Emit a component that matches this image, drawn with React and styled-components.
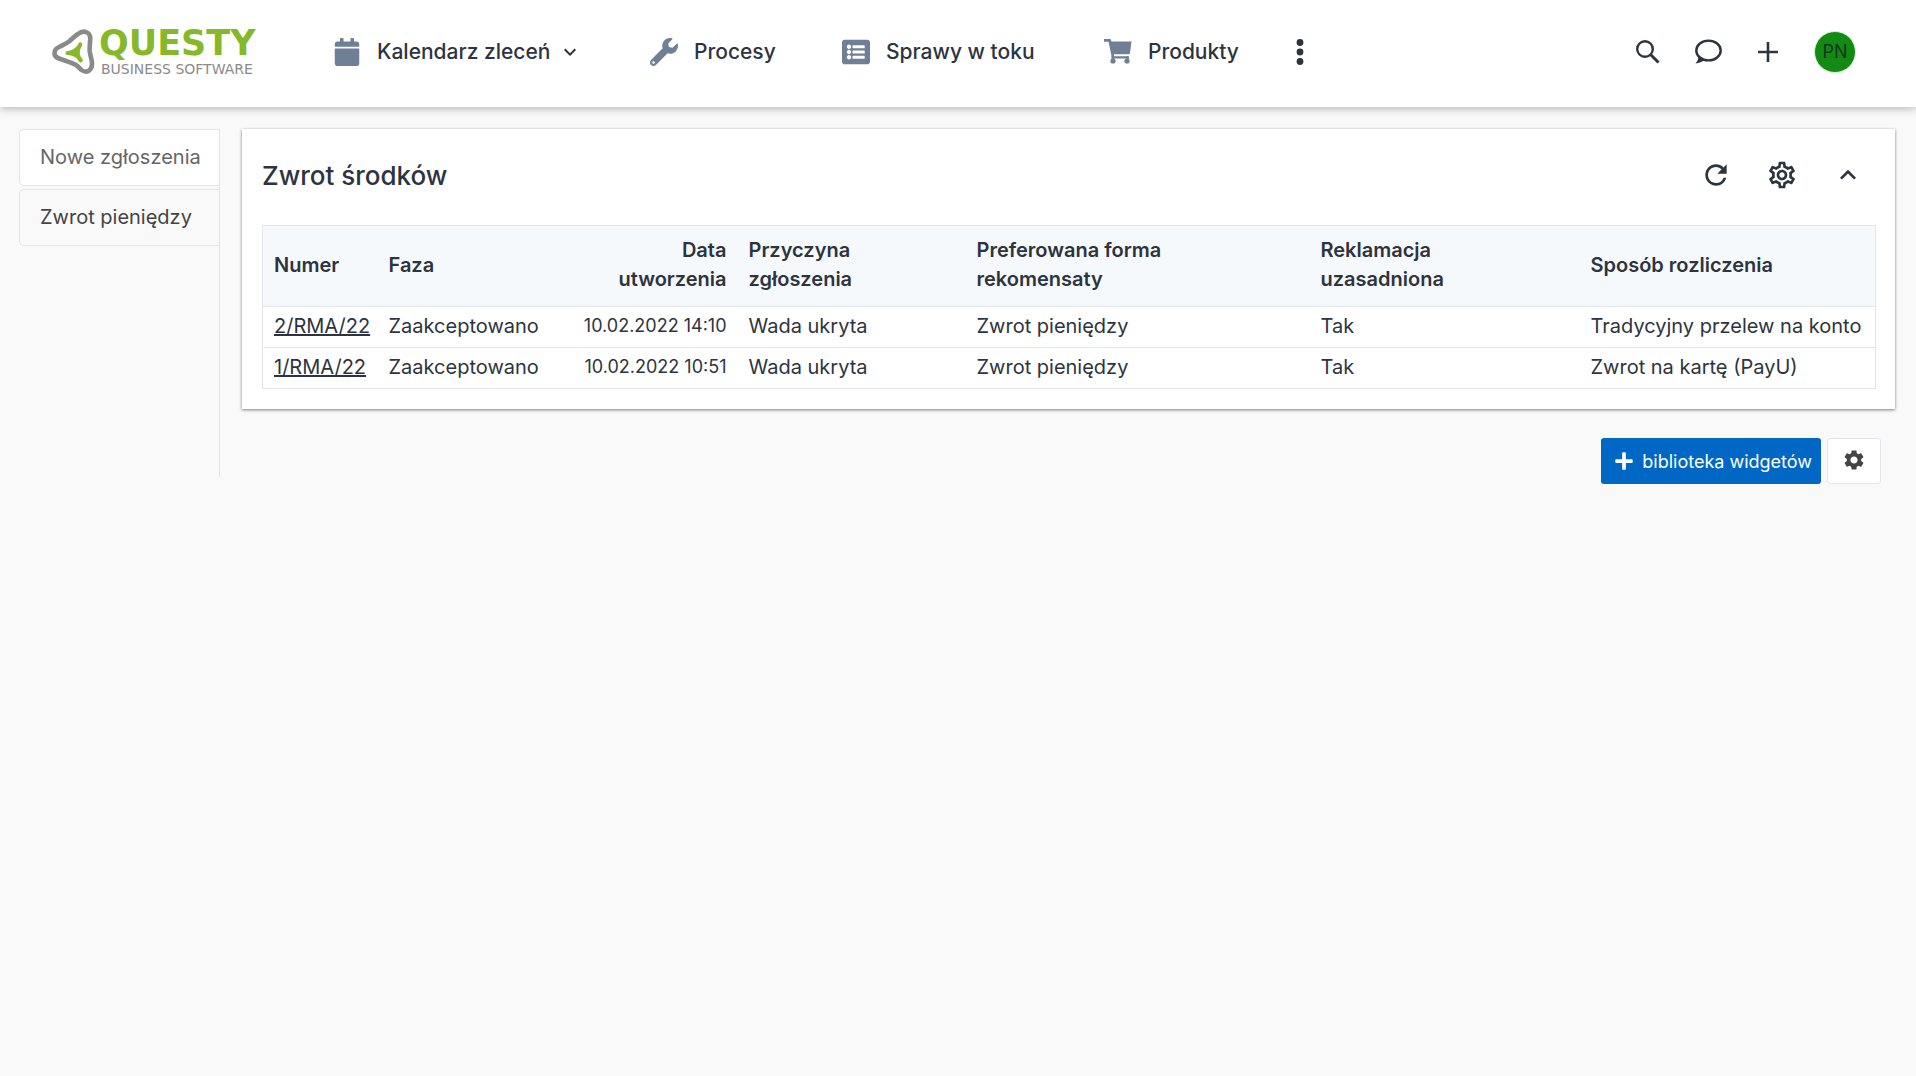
import React from 'react';
import styled, { createGlobalStyle } from 'styled-components';
import { FaCalendar, FaWrench, FaListAlt, FaPlus } from 'react-icons/fa';
import { MdRefresh, MdOutlineSettings, MdSettings, MdKeyboardArrowUp, MdKeyboardArrowDown } from 'react-icons/md';

const ink = '#2d3440';
const line = '#e2e6ea';

const GlobalStyle = createGlobalStyle`
  * { box-sizing: border-box; }
  body {
    margin: 0;
    background: #f9f9f9;
    color: ${ink};
    font-family: Inter, 'Noto Sans', sans-serif;
    font-size: 20px;
  }
  button, a { font: inherit; color: inherit; }
  svg { display: block; flex: none; }
`;

const Header = styled.header`
  display: flex;
  align-items: center;
  height: 107px;
  padding: 0 60px 4px 52px;
  background: #fff;
  box-shadow: 0 2px 8px rgba(0, 0, 0, 0.26);
`;

const Brand = styled.a`
  display: flex;
  align-items: center;
  gap: 4px;
  width: 281px;
  text-decoration: none;
`;

const BrandText = styled.span`
  display: flex;
  flex-direction: column;
  gap: 2px;
  font-family: 'DejaVu Sans', sans-serif;
`;

const BrandName = styled.span`
  color: #86b929;
  font-size: 35px;
  font-weight: 700;
  line-height: 32px;
`;

const BrandLine = styled.span`
  color: #8a8a8a;
  font-size: 14px;
  line-height: 16px;
  padding-left: 2px;
  white-space: nowrap;
`;

const Nav = styled.nav`
  display: flex;
  align-items: center;
  flex: 1;
`;

const NavLink = styled.a`
  display: flex;
  align-items: center;
  gap: 16px;
  width: ${(p) => p.$width}px;
  font-size: 21px;
  font-weight: 500;
  text-decoration: none;
  white-space: nowrap;

  > svg:first-child { color: #6f7f96; }
`;

const NavLabel = styled.span`
  display: flex;
  align-items: center;
  gap: 8px;
`;

const IconButton = styled.button`
  display: flex;
  align-items: center;
  justify-content: center;
  width: 40px;
  height: 40px;
  padding: 0;
  border: 0;
  background: none;
  cursor: pointer;
`;

const Tools = styled.div`
  display: flex;
  align-items: center;
  gap: 20px;
`;

const Avatar = styled.button`
  width: 42px;
  height: 42px;
  margin-left: 6px;
  padding: 0;
  border: 1px solid #d3f3d3;
  border-radius: 50%;
  background: #128a14;
  && { color: #17361f; font-size: 18px; }
`;

const Page = styled.div`
  display: flex;
  align-items: flex-start;
  gap: 22px;
  padding: 22px 21px 0 19px;
`;

const Tabs = styled.nav`
  display: flex;
  flex-direction: column;
  gap: 3px;
  flex: none;
  width: 201px;
  min-height: 348px;
  border-right: 1px solid ${line};
`;

const Tab = styled.a`
  height: 57px;
  padding: 0 20px;
  border: 1px solid ${line};
  border-right: 0;
  border-radius: 5px 0 0 5px;
  background: ${(p) => (p.$active ? '#f9f9f9' : '#fff')};
  && { color: ${(p) => (p.$active ? '#444' : '#666')}; }
  line-height: 55px;
  text-decoration: none;
  white-space: nowrap;
`;

const Main = styled.main`
  flex: 1;
  min-width: 0;
`;

const Card = styled.section`
  padding: 0 20px 20px;
  background: #fff;
  box-shadow: 0 1px 3px rgba(0, 0, 0, 0.5);
`;

const CardHead = styled.div`
  display: flex;
  align-items: center;
  justify-content: space-between;
  height: 96px;
  padding: 0 7px 4px 0;
`;

const Title = styled.h1`
  margin: 0;
  font-size: 26px;
  font-weight: 500;
`;

const CardTools = styled.div`
  display: flex;
  gap: 26px;
`;

const Table = styled.table`
  width: 100%;
  table-layout: fixed;
  border-collapse: collapse;
  border: 1px solid ${line};
`;

const Col = styled.col`
  width: ${(p) => p.$width}px;
`;

const Th = styled.th`
  height: 81px;
  padding: 0 11px 2px;
  background: #f6f9fc;
  border-bottom: 1px solid ${line};
  font-weight: 600;
  line-height: 29px;
  text-align: ${(p) => (p.$right ? 'right' : 'left')};
  white-space: pre-line;
`;

const Td = styled.td`
  height: 41px;
  padding: 0 11px 2px;
  border-bottom: 1px solid ${line};
  font-size: ${(p) => (p.$right ? 18 : 20)}px;
  line-height: 24px;
  text-align: ${(p) => (p.$right ? 'right' : 'left')};
  white-space: nowrap;
`;

const RecordLink = styled.a`
  text-decoration: underline;
`;

const Actions = styled.div`
  display: flex;
  justify-content: flex-end;
  gap: 6px;
  padding: 29px 14px 0 0;
`;

const LibraryButton = styled.button`
  display: flex;
  align-items: center;
  gap: 8px;
  height: 46px;
  padding: 0 9px 0 13px;
  border: 0;
  border-radius: 3px;
  background: #0067c5;
  && { color: #fff; font-size: 18px; }
`;

const SettingsButton = styled.button`
  display: flex;
  align-items: center;
  justify-content: center;
  width: 54px;
  height: 46px;
  padding: 0 0 2px;
  border: 1px solid ${line};
  border-radius: 3px;
  background: #fff;
  && { color: #444; }
`;

const LogoMark = () => (
  <svg width="43" height="46" viewBox="0 0 43 46" fill="none" aria-hidden="true">
    <path
      d="M26.300 4.700C31 1 38.300 2.500 38.300 9.700C38 14 37.400 18 37.700 22C38.200 27 40 30 40 34.700C40 41 35 45 29.500 41C27 39 26.500 37.500 24 36C20 33.500 16 32.800 11.500 31C6.500 29.500 2.500 28.500 2.500 24.500C2.500 20 5 19 8 17.500C11 16 14 14.800 17 12.500C20.500 9.500 22.500 7 26.300 4.700Z"
      stroke="#8a8a8a" strokeWidth="4.600" strokeLinejoin="round"
    />
    <path d="M28.300 15.500Q25.500 20 25.500 23.500Q25.500 27.500 28.700 31.300M15.500 24H24" stroke="#86b929" strokeWidth="4.200" strokeLinecap="round" />
    <path d="M16 22Q22 21 26 16L27.500 23L26.500 30.500Q22 26.500 16 26Z" fill="#86b929" />
  </svg>
);

const CartIcon = () => (
  <svg width="28" height="25" viewBox="0 0 28 25" fill="currentColor" aria-hidden="true">
    <path d="M0 0H6.500L7.500 2.500H27.500L26 14Q25.800 15.200 24.500 15.200H9.800L10 17.200H24.500V19.500H8L4.600 2.800H0Z" />
    <circle cx="9" cy="22" r="2.600" />
    <circle cx="23" cy="22" r="2.600" />
    <path d="M7.500 17.200H10V21H7.500ZM22.500 17.200H24.800V21H22.500Z" />
  </svg>
);

const DotsIcon = () => (
  <svg width="8" height="26" viewBox="0 0 8 26" fill="currentColor" aria-hidden="true">
    <circle cx="4" cy="3.500" r="3.400" />
    <circle cx="4" cy="13" r="3.400" />
    <circle cx="4" cy="22.500" r="3.400" />
  </svg>
);

const SearchIcon = () => (
  <svg width="24" height="24" viewBox="0 0 24 24" fill="none" stroke="currentColor" aria-hidden="true">
    <circle cx="9" cy="9" r="7.800" strokeWidth="2.400" />
    <path d="M14.500 14.500L22.500 22.500" strokeWidth="3" />
  </svg>
);

const CommentIcon = () => (
  <svg width="28" height="26" viewBox="0 0 28 26" fill="none" stroke="currentColor" strokeWidth="2.400" aria-hidden="true">
    <ellipse cx="14.500" cy="11.500" rx="12.200" ry="9.900" />
    <path d="M4.500 17.500C4.500 20.500 3 22.800 1.500 24.500C5 24.300 8.500 22.800 10.500 20.800Z" fill="currentColor" stroke="none" />
  </svg>
);

const PlusIcon = () => (
  <svg width="20" height="20" viewBox="0 0 20 20" fill="none" stroke="currentColor" strokeWidth="2.600" aria-hidden="true">
    <path d="M10 0V20M0 10H20" />
  </svg>
);

const navItems = [
  { label: 'Kalendarz zleceń', icon: <FaCalendar size={28} />, width: 317, menu: true },
  { label: 'Procesy', icon: <FaWrench size={28} />, width: 192 },
  { label: 'Sprawy w toku', icon: <FaListAlt size={28} />, width: 262 },
  { label: 'Produkty', icon: <CartIcon />, width: 176 },
];

const columns = [
  { label: 'Numer', width: 115 },
  { label: 'Faza', width: 180 },
  { label: 'Data\nutworzenia', width: 180, right: true },
  { label: 'Przyczyna\nzgłoszenia', width: 228 },
  { label: 'Preferowana forma\nrekomensaty', width: 344 },
  { label: 'Reklamacja\nuzasadniona', width: 270 },
  { label: 'Sposób rozliczenia', width: 296 },
];

const rows = [
  ['2/RMA/22', 'Zaakceptowano', '10.02.2022 14:10', 'Wada ukryta', 'Zwrot pieniędzy', 'Tak', 'Tradycyjny przelew na konto'],
  ['1/RMA/22', 'Zaakceptowano', '10.02.2022 10:51', 'Wada ukryta', 'Zwrot pieniędzy', 'Tak', 'Zwrot na kartę (PayU)'],
];

export default function App() {
  return (
    <>
      <GlobalStyle />
      <Header>
        <Brand href="#">
          <LogoMark />
          <BrandText>
            <BrandName>QUESTY</BrandName>
            <BrandLine>BUSINESS SOFTWARE</BrandLine>
          </BrandText>
        </Brand>
        <Nav>
          {navItems.map((item) => (
            <NavLink key={item.label} href="#" $width={item.width}>
              {item.icon}
              <NavLabel>
                {item.label}
                {item.menu && <MdKeyboardArrowDown size={24} />}
              </NavLabel>
            </NavLink>
          ))}
          <IconButton aria-label="Więcej"><DotsIcon /></IconButton>
        </Nav>
        <Tools>
          <IconButton aria-label="Szukaj"><SearchIcon /></IconButton>
          <IconButton aria-label="Wiadomości"><CommentIcon /></IconButton>
          <IconButton aria-label="Dodaj"><PlusIcon /></IconButton>
          <Avatar>PN</Avatar>
        </Tools>
      </Header>
      <Page>
        <Tabs>
          <Tab href="#">Nowe zgłoszenia</Tab>
          <Tab href="#" $active>Zwrot pieniędzy</Tab>
        </Tabs>
        <Main>
          <Card>
            <CardHead>
              <Title>Zwrot środków</Title>
              <CardTools>
                <IconButton aria-label="Odśwież"><MdRefresh size={32} /></IconButton>
                <IconButton aria-label="Ustawienia"><MdOutlineSettings size={32} /></IconButton>
                <IconButton aria-label="Zwiń"><MdKeyboardArrowUp size={32} /></IconButton>
              </CardTools>
            </CardHead>
            <Table>
              <colgroup>
                {columns.map((c) => <Col key={c.label} $width={c.width} />)}
              </colgroup>
              <thead>
                <tr>
                  {columns.map((c) => <Th key={c.label} scope="col" $right={c.right}>{c.label}</Th>)}
                </tr>
              </thead>
              <tbody>
                {rows.map((row) => (
                  <tr key={row[0]}>
                    {row.map((value, i) => (
                      <Td key={columns[i].label} $right={columns[i].right}>
                        {i === 0 ? <RecordLink href="#">{value}</RecordLink> : value}
                      </Td>
                    ))}
                  </tr>
                ))}
              </tbody>
            </Table>
          </Card>
          <Actions>
            <LibraryButton><FaPlus size={20} />biblioteka widgetów</LibraryButton>
            <SettingsButton aria-label="Ustawienia widgetów"><MdSettings size={24} /></SettingsButton>
          </Actions>
        </Main>
      </Page>
    </>
  );
}
